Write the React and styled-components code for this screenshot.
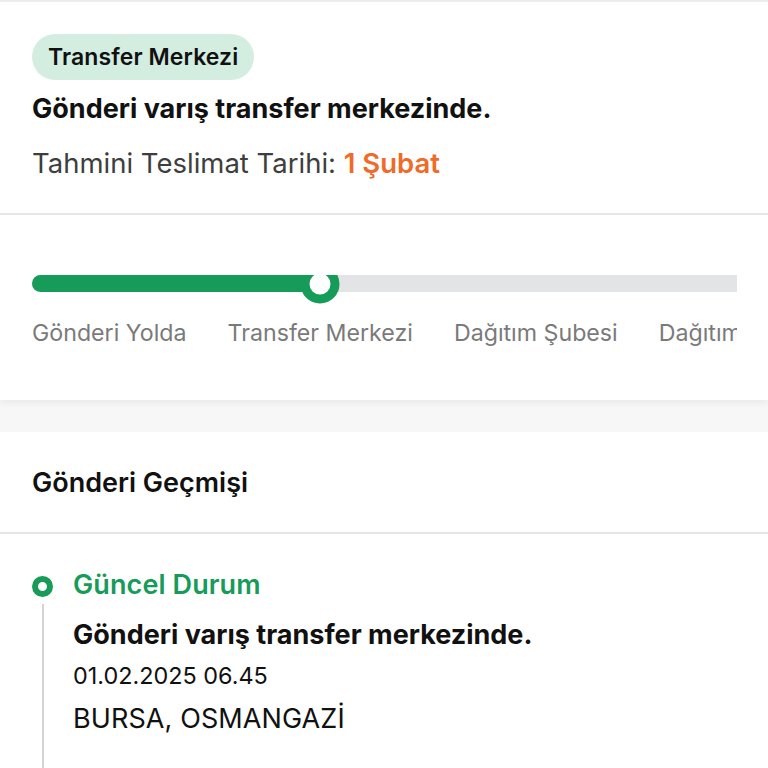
import React from 'react'
import styled, { createGlobalStyle } from 'styled-components'

const Global = createGlobalStyle`
  html, body {
    margin: 0;
    padding: 0;
    background: #f7f7f7;
    font-family: Inter, "Noto Sans", sans-serif;
    -webkit-font-smoothing: antialiased;
  }
`

const Page = styled('div')`
  width: 768px;
  height: 768px;
  overflow: hidden;
  background: #f7f7f7;
  border-top: 2px solid #ececec;
  box-sizing: border-box;
`
const Card = styled('section')`
  background: #fff;
  box-shadow: ${p => (p.shadow ? '0 3px 7px rgba(0,0,0,0.06)' : 'none')};
  margin-bottom: ${p => p.gap || 0}px;
`
const Summary = styled('div')`
  padding: 32px 32px 33px;
  border-bottom: 2px solid #e6e6e6;
`
const Badge = styled('span')`
  display: inline-block;
  background: #d3eee1;
  color: #111;
  font-weight: 600;
  font-size: 23px;
  line-height: 46px;
  padding: 0 16px;
  border-radius: 23px;
  letter-spacing: 0.1px;
`
const Title = styled('h1')`
  margin: 13px 0 0;
  font-size: 27px;
  line-height: 32px;
  font-weight: 700;
  color: #111;
`
const Eta = styled('p')`
  margin: 21px 0 0;
  font-size: 27.5px;
  line-height: 34px;
  color: #3e3e3e;

  strong {
    color: #f06a28;
    font-weight: 600;
  }
`
const Progress = styled('div')`
  padding: 60px 31px 53px 32px;
`
const Scroller = styled('div')`
  overflow: hidden;
`
const Track = styled('div')`
  position: relative;
  width: 760px;
  height: 17px;
  border-radius: 9px;
  background: #e3e4e6;
`
const Fill = styled('div')`
  height: 100%;
  border-radius: 9px;
  background: #169b59;
`
const Knob = styled('span')`
  position: absolute;
  top: 50%;
  width: 39px;
  height: 39px;
  box-sizing: border-box;
  border: 9px solid #169b59;
  border-radius: 50%;
  background: #fff;
  transform: translate(-50%, -50%);
`
const Steps = styled('div')`
  display: flex;
  gap: 41px;
  margin-top: 27px;
  white-space: nowrap;
`
const Step = styled('span')`
  font-size: 23.2px;
  line-height: 28px;
  color: #7a7a7a;
  flex-shrink: 0;
`
const HistoryHead = styled('h2')`
  margin: 0;
  padding: 34px 32px 32px;
  font-size: 27px;
  line-height: 34px;
  font-weight: 600;
  color: #111;
  border-bottom: 2px solid #e6e6e6;
`
const Timeline = styled('div')`
  padding: 34px 32px 40px;
`
const Event = styled('div')`
  display: grid;
  grid-template-columns: 21px 1fr;
  column-gap: 20px;
`
const Rail = styled('div')`
  display: flex;
  flex-direction: column;
  align-items: center;
  padding-top: 8px;
`
const Dot = styled('span')`
  width: 21px;
  height: 21px;
  box-sizing: border-box;
  border: 6px solid #169b59;
  border-radius: 50%;
`
const Line = styled('span')`
  flex: 1;
  width: 2px;
  margin-top: 7px;
  background: #d4d4d4;
`
const EventBody = styled('div')`
  display: flex;
  flex-direction: column;
`
const Status = styled('div')`
  font-size: 27px;
  font-weight: 600;
  color: ${p => (p.current ? '#169b59' : '#111')};
  line-height: 34px;
  letter-spacing: 0.1px;
`
const EventText = styled('div')`
  margin-top: 16px;
  font-size: 27px;
  font-weight: 700;
  color: #111;
  line-height: 34px;
`
const EventDate = styled('div')`
  margin-top: 9px;
  font-size: 23.4px;
  color: #111;
  line-height: 30px;
`
const EventPlace = styled('div')`
  margin-top: 11px;
  font-size: 27px;
  color: #111;
  line-height: 34px;
  letter-spacing: 0.1px;
  padding-bottom: 40px;
`

const steps = ['Gönderi Yolda', 'Transfer Merkezi', 'Dağıtım Şubesi', 'Dağıtım Merkezi']

const App = () => {
  const fill = 288

  return (
    <Page>
      <Global />
      <Card shadow gap={32}>
        <Summary>
          <Badge>Transfer Merkezi</Badge>
          <Title>Gönderi varış transfer merkezinde.</Title>
          <Eta>
            Tahmini Teslimat Tarihi: <strong>1 Şubat</strong>
          </Eta>
        </Summary>
        <Progress>
          <Scroller>
            <Track>
              <Fill style={{ width: fill }} />
              <Knob style={{ left: fill }} />
            </Track>
            <Steps>
              {steps.map(s => <Step key={s}>{s}</Step>)}
            </Steps>
          </Scroller>
        </Progress>
      </Card>
      <Card>
        <HistoryHead>Gönderi Geçmişi</HistoryHead>
        <Timeline>
          <Event>
            <Rail>
              <Dot />
              <Line />
            </Rail>
            <EventBody>
              <Status current>Güncel Durum</Status>
              <EventText>Gönderi varış transfer merkezinde.</EventText>
              <EventDate>01.02.2025 06.45</EventDate>
              <EventPlace>BURSA, OSMANGAZİ</EventPlace>
            </EventBody>
          </Event>
        </Timeline>
      </Card>
    </Page>
  )
}

export default App
